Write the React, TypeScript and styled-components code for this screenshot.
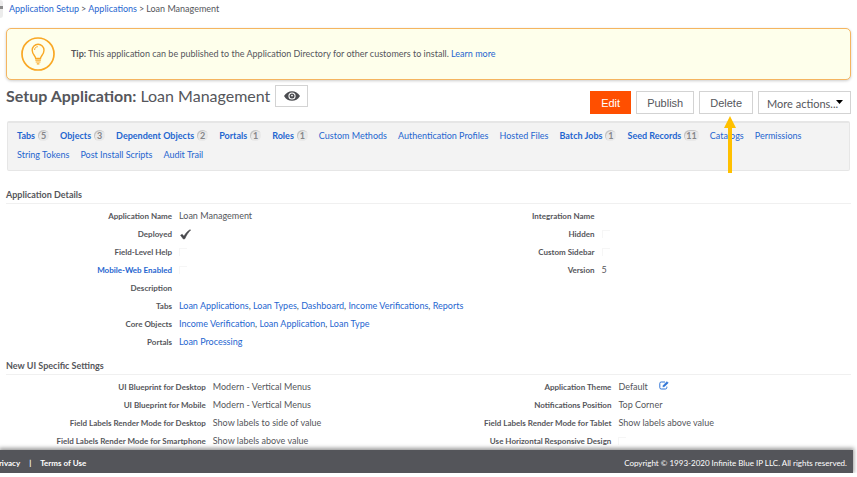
import React from 'react';
import styled, { createGlobalStyle, css } from 'styled-components';

const GlobalStyle = createGlobalStyle`
  * { box-sizing: border-box; }
  body {
    margin: 0;
    background: #fff;
    color: #55565b;
    font: 9px/18px Lato, sans-serif;
  }
  button, select, input { font: inherit; color: inherit; margin: 0; }
  h1, h2, dl, dd, p { margin: 0; }
`;

const Page = styled.div`
  padding-right: 4px;
`;

const Content = styled.main`
  padding: 0 2px 0 6px;
`;

const TopBar = styled.div`
  display: flex;
  align-items: flex-start;
  height: 28px;
`;

const SidebarHandle = styled.button`
  width: 3px;
  height: 18px;
  padding: 0;
  border: 0;
  border-radius: 0 3px 3px 0;
  background: linear-gradient(#ececec 6px, #8b8b8b 6px, #8b8b8b 9px, #ececec 9px);
`;

const Breadcrumb = styled.nav`
  display: flex;
  gap: 2px;
  padding-left: 6px;
`;

const Link = styled.a<{ $strong?: boolean }>`
  color: #1f66d0;
  text-decoration: none;
  font-weight: ${({ $strong }) => ($strong ? 700 : 400)};
`;

const Tip = styled.section`
  display: flex;
  align-items: center;
  gap: 16px;
  height: 52px;
  padding-left: 14px;
  border: 1px solid #f5b560;
  border-radius: 5px;
  background: #feffeb;
  box-shadow: 0 1px 3px rgba(0, 0, 0, 0.2);
`;

const Header = styled.header`
  display: flex;
  justify-content: space-between;
  padding-top: 4px;
  height: 41px;
`;

const Heading = styled.div`
  display: flex;
  align-items: center;
  gap: 5px;
  height: 23px;
`;

const Title = styled.h1`
  font-size: 16px;
  line-height: 22px;
  font-weight: 400;
`;

const Actions = styled.div`
  display: flex;
  gap: 5px;
  padding-top: 7px;
`;

const control = css`
  height: 23px;
  border: 1px solid #d3d3d3;
  background: #fff;
`;

const Button = styled.button<{ $primary?: boolean }>`
  ${control}
  padding: 0 10px;
  font: 11px/20px "Liberation Sans", Arial, sans-serif;
  ${({ $primary }) =>
    $primary &&
    css`
      border-color: #ff4f00;
      background: #ff4f00;
      color: #fff;
    `}
`;

const EyeButton = styled.button`
  ${control}
  display: grid;
  place-items: center;
  width: 33px;
  height: 22px;
  padding: 0;
`;

const Pointed = styled.div`
  position: relative;
`;

const Arrow = styled.svg`
  position: absolute;
  z-index: 1;
  top: 25px;
  left: 23px;
`;

const MoreActions = styled.label`
  position: relative;
  select {
    ${control}
    width: 93px;
    padding: 2px 8px 0 8px;
    border-radius: 0;
    appearance: none;
    font-size: 11px;
  }
  svg {
    position: absolute;
    top: 9px;
    right: 8px;
    pointer-events: none;
  }
`;

const SetupNav = styled.nav`
  display: flex;
  flex-wrap: wrap;
  align-content: flex-start;
  column-gap: 11px;
  margin: 0 1px 9px;
  padding: 3px 45px 5px 9px;
  height: 50px;
  border: 1px solid #e6e6e6;
  border-top-width: 2px;
  border-radius: 2px;
  background: #f3f3f3;
`;

const NavItem = styled.div`
  display: flex;
  align-items: center;
  gap: 3px;
  height: 19px;
  white-space: nowrap;
`;

const Count = styled.span`
  min-width: 11px;
  height: 11px;
  padding: 0 2px;
  border-radius: 6px;
  background: #e9e9e9;
  box-shadow: inset 1px 1px 0 #c4c4c4;
  color: #85868a;
  font: 700 9px/11px Lato, sans-serif;
  text-align: center;
`;

const Section = styled.section`
  padding-top: 6px;
  h2 {
    border-bottom: 1px solid #f0f0f0;
    font-size: 9px;
    line-height: 17px;
    font-weight: 700;
  }
`;

const SectionBody = styled.div`
  display: grid;
  grid-template-columns: 1fr 1fr;
  padding-top: 3px;
`;

const Fields = styled.dl<{ $label: number }>`
  display: grid;
  grid-template-columns: minmax(0, ${({ $label }) => $label}fr) minmax(0, ${({ $label }) => 50 - $label}fr);
  grid-auto-rows: 18px;
  align-content: start;
  white-space: nowrap;
  dt {
    padding-right: 3px;
    font-size: 8px;
    font-weight: 700;
    text-align: right;
  }
  dd {
    display: flex;
    align-items: center;
    padding-left: 4px;
  }
`;

const Check = styled.input`
  width: 8px;
  height: 8px;
  border: solid #f6f6f6;
  border-width: 1px 0 0 1px;
  appearance: none;
`;

const ThemeValue = styled.span`
  display: flex;
  align-items: center;
  gap: 11px;
`;

const Footer = styled.footer`
  position: relative;
  display: flex;
  justify-content: space-between;
  height: 23px;
  padding-right: 6px;
  background: #54555a;
  box-shadow: 0 -1px 4px 1px rgba(0, 0, 0, 0.4), 0 1px 0 #c9c9cb;
  color: #fff;
  font-size: 8px;
  line-height: 26px;
  div { display: flex; gap: 9px; margin-left: -6px; font-weight: 700; }
  a { color: inherit; text-decoration: none; }
`;

const BulbIcon = () => (
  <svg width="34" height="34" viewBox="0 0 34 34" fill="none" stroke="#f9a825" aria-hidden="true">
    <circle cx="17" cy="17" r="16" strokeWidth="1.7" />
    <path d="M14.7 21.5c0-2.5-3.5-4-3.5-8.3a5.9 5.9 0 0 1 11.8 0c0 4.3-3.5 5.8-3.5 8.3z" strokeWidth="1.4" />
    <path d="M13.6 13c0-2 1.2-3.2 3.2-3.3" strokeWidth="1" />
    <path d="M14.3 23.2h5.6M14.7 25h4.8M15.8 26.8h2.6" strokeWidth="1.2" />
  </svg>
);

const EyeIcon = () => (
  <svg width="16" height="12" viewBox="0 0 16 12" aria-hidden="true">
    <path d="M0 6C2 2.700 4.800 1.200 8 1.200S14 2.700 16 6c-2 3.300-4.800 4.800-8 4.800S2 9.300 0 6z" fill="#4b4c50" />
    <circle cx="8" cy="6" r="3.6" fill="#fff" />
    <circle cx="8" cy="6" r="2.5" fill="#4b4c50" />
    <circle cx="8" cy="5.6" r="0.9" fill="#fff" />
  </svg>
);

const CheckIcon = () => (
  <svg width="13" height="11" viewBox="0 0 14 12" role="img" aria-label="Yes">
    <path d="M1.6 6.8 3.4 5.8 5.3 8C7.2 4.6 9.2 2.2 12 .7l.6.5C10 3.7 8.1 6.6 6.3 10.6L4.7 11z" fill="#45464a" stroke="#45464a" strokeWidth=".6" />
  </svg>
);

const EditIcon = () => (
  <svg width="10" height="9" viewBox="0 0 10 9" fill="none" stroke="#2f74d6" aria-hidden="true">
    <path d="M6 1H2.200Q.8 1 .8 2.400v4.200Q.8 8 2.200 8h4.200q1.400 0 1.400-1.400V5.600" />
    <path d="m3.800 6 .5-1.800L8 .6l1.300 1.300-3.700 3.600z" fill="#2f74d6" strokeWidth=".4" />
  </svg>
);

const navItems: [string, number?][] = [
  ['Tabs', 5], ['Objects', 3], ['Dependent Objects', 2], ['Portals', 1], ['Roles', 1],
  ['Custom Methods'], ['Authentication Profiles'], ['Hosted Files'], ['Batch Jobs', 1],
  ['Seed Records', 11], ['Catalogs'], ['Permissions'], ['String Tokens'],
  ['Post Install Scripts'], ['Audit Trail'],
];

const LinkList = ({ items }: { items: string[] }) => (
  <span>
    {items.map((item, i) => (
      <React.Fragment key={item}>
        {i > 0 && ', '}
        <Link href="#">{item}</Link>
      </React.Fragment>
    ))}
  </span>
);

const Flag = ({ label }: { label: string }) => <Check type="checkbox" aria-label={label} disabled />;

type Field = [React.ReactNode, React.ReactNode?];

const FieldList = ({ label, fields }: { label: number; fields: Field[] }) => (
  <Fields $label={label}>
    {fields.map(([name, value], i) => (
      <React.Fragment key={i}>
        <dt>{name}</dt>
        <dd>{value}</dd>
      </React.Fragment>
    ))}
  </Fields>
);

export default function App() {
  return (
    <Page>
      <GlobalStyle />
      <TopBar>
        <SidebarHandle aria-label="Open sidebar" />
        <Breadcrumb aria-label="Breadcrumb">
          <Link href="#">Application Setup</Link>
          <span>&gt;</span>
          <Link href="#">Applications</Link>
          <span>&gt;</span>
          <span>Loan Management</span>
        </Breadcrumb>
      </TopBar>
      <Content>
        <Tip>
          <BulbIcon />
          <p>
            <b>Tip:</b> This application can be published to the Application Directory for other
            customers to install. <Link href="#">Learn more</Link>
          </p>
        </Tip>
        <Header>
          <Heading>
            <Title><b>Setup Application:</b> Loan Management</Title>
            <EyeButton aria-label="View"><EyeIcon /></EyeButton>
          </Heading>
          <Actions>
            <Button $primary>Edit</Button>
            <Button>Publish</Button>
            <Pointed>
              <Button>Delete</Button>
              <Arrow width="16" height="57" viewBox="0 0 16 57" fill="#ffc000" aria-hidden="true">
                <path d="M8 0l6 12h-4v45H6V12H2z" />
              </Arrow>
            </Pointed>
            <MoreActions>
              <select aria-label="More actions">
                <option>More actions...</option>
              </select>
              <svg width="7" height="5" viewBox="0 0 7 5" aria-hidden="true"><path d="M0 0h7L3.500 4z" /></svg>
            </MoreActions>
          </Actions>
        </Header>
        <SetupNav aria-label="Application setup">
          {navItems.map(([name, count]) => (
            <NavItem key={name}>
              <Link href="#" $strong={count !== undefined}>{name}</Link>
              {count !== undefined && <Count>{count}</Count>}
            </NavItem>
          ))}
        </SetupNav>
        <Section>
          <h2>Application Details</h2>
          <SectionBody>
            <FieldList
              label={20}
              fields={[
                ['Application Name', 'Loan Management'],
                ['Deployed', <CheckIcon />],
                ['Field-Level Help', <Flag label="Field-Level Help" />],
                [<Link href="#" $strong>Mobile-Web Enabled</Link>, <Flag label="Mobile-Web Enabled" />],
                ['Description'],
                ['Tabs', <LinkList items={['Loan Applications', 'Loan Types', 'Dashboard', 'Income Verifications', 'Reports']} />],
                ['Core Objects', <LinkList items={['Income Verification', 'Loan Application', 'Loan Type']} />],
                ['Portals', <LinkList items={['Loan Processing']} />],
              ]}
            />
            <FieldList
              label={20}
              fields={[
                ['Integration Name'],
                ['Hidden', <Flag label="Hidden" />],
                ['Custom Sidebar', <Flag label="Custom Sidebar" />],
                ['Version', '5'],
              ]}
            />
          </SectionBody>
        </Section>
        <Section>
          <h2>New UI Specific Settings</h2>
          <SectionBody>
            <FieldList
              label={24}
              fields={[
                ['UI Blueprint for Desktop', 'Modern - Vertical Menus'],
                ['UI Blueprint for Mobile', 'Modern - Vertical Menus'],
                ['Field Labels Render Mode for Desktop', 'Show labels to side of value'],
                ['Field Labels Render Mode for Smartphone', 'Show labels above value'],
              ]}
            />
            <FieldList
              label={22}
              fields={[
                ['Application Theme', <ThemeValue>Default <Link href="#" aria-label="Edit theme"><EditIcon /></Link></ThemeValue>],
                ['Notifications Position', 'Top Corner'],
                ['Field Labels Render Mode for Tablet', 'Show labels above value'],
                ['Use Horizontal Responsive Design', <Flag label="Use Horizontal Responsive Design" />],
              ]}
            />
          </SectionBody>
        </Section>
      </Content>
      <Footer>
        <div>
          <a href="#">Privacy</a>
          <span>|</span>
          <a href="#">Terms of Use</a>
        </div>
        <span>Copyright © 1993-2020 Infinite Blue IP LLC. All rights reserved.</span>
      </Footer>
    </Page>
  );
}
